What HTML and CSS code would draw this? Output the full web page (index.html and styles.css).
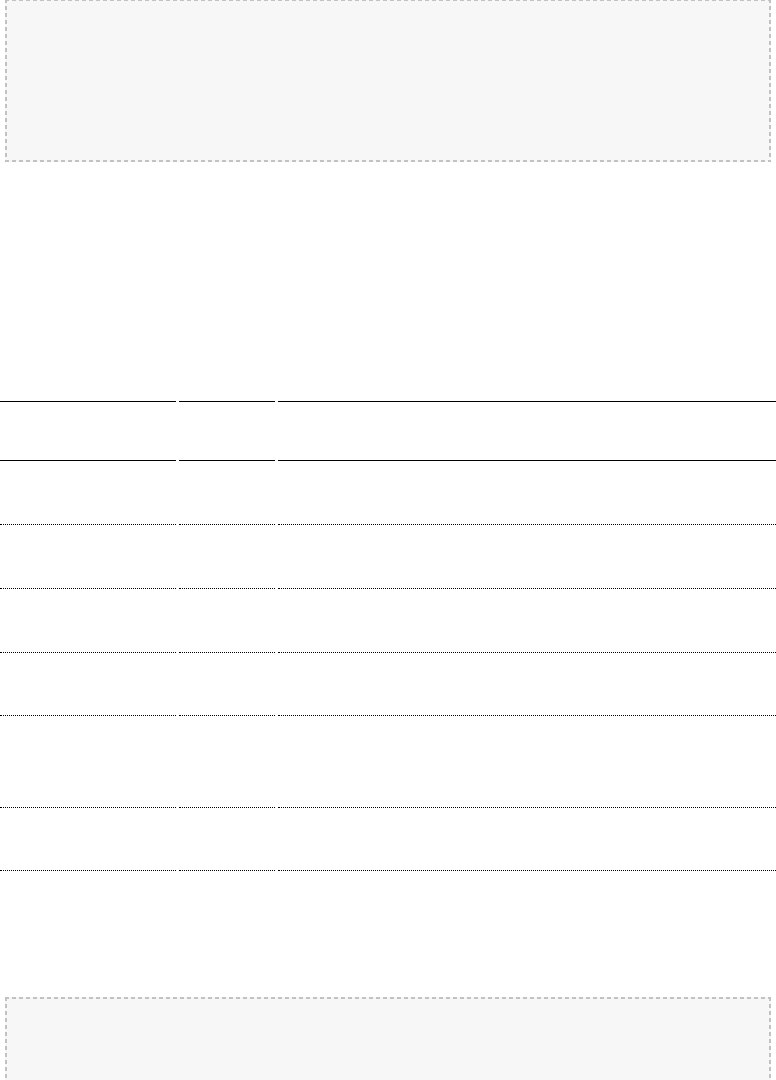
FILE: index.html
```html
<!DOCTYPE html>
<html lang="en">

<head>
    <meta charset="UTF-8">
    <meta name="viewport" content="width=device-width, initial-scale=1.0">
    <title>Tabella</title>
    <link rel="stylesheet" href="styles.css">
</head>

<body>
    <div class="dropzone dropzone-top"></div>

    <div class="grid">
        <div class="row head">
            <div class="cell c1"></div>
            <div class="cell c2"></div>
            <div class="cell c3"></div>
        </div>
        <div class="row">
            <div class="cell c1"></div>
            <div class="cell c2"></div>
            <div class="cell c3"></div>
        </div>
        <div class="row">
            <div class="cell c1"></div>
            <div class="cell c2"></div>
            <div class="cell c3"></div>
        </div>
        <div class="row">
            <div class="cell c1"></div>
            <div class="cell c2"></div>
            <div class="cell c3"></div>
        </div>
        <div class="row short">
            <div class="cell c1"></div>
            <div class="cell c2"></div>
            <div class="cell c3"></div>
        </div>
        <div class="row tall">
            <div class="cell c1"></div>
            <div class="cell c2"></div>
            <div class="cell c3"></div>
        </div>
        <div class="row short">
            <div class="cell c1"></div>
            <div class="cell c2"></div>
            <div class="cell c3"></div>
        </div>
    </div>

    <div class="dropzone dropzone-bottom"></div>
</body>

</html>
```

FILE: styles.css
```css
body {
    margin: 0;
    padding: 0;
    background-color: #fff;
    font-family: 'Liberation Sans', Arial, sans-serif;
}

/* bordo tratteggiato disegnato a mano: trattini da 4px, spazi da 3px */
.dropzone {
    margin: 0 5px;
    box-sizing: border-box;
    background:
        linear-gradient(90deg, #c2c2c2 4px, transparent 4px) left top / 7px 2px repeat-x,
        linear-gradient(90deg, #c2c2c2 4px, transparent 4px) left bottom / 7px 2px repeat-x,
        linear-gradient(180deg, #c2c2c2 4px, transparent 4px) left top / 2px 7px repeat-y,
        linear-gradient(180deg, #c2c2c2 4px, transparent 4px) right top / 2px 7px repeat-y,
        #f7f7f7;
}

.dropzone-top {
    margin-top: -1px;
    height: 163px;
}

.dropzone-bottom {
    margin-top: 126px;
    height: 100px;
}

.grid {
    margin-top: 239px;
    display: flex;
    flex-direction: column;
}

.row {
    display: flex;
    gap: 3px;
    height: 64px;
}

.row.short {
    height: 63px;
}

.row.tall {
    height: 92px;
}

.cell {
    box-sizing: border-box;
    border-bottom: 1px dotted #000;
}

.c1 {
    width: 176px;
}

.c2 {
    width: 96px;
}

.c3 {
    flex: 1;
}

.row.head {
    height: 60px;
}

.row.head .cell {
    border-top: 1px solid #000;
    border-bottom: 1px solid #000;
}
```
